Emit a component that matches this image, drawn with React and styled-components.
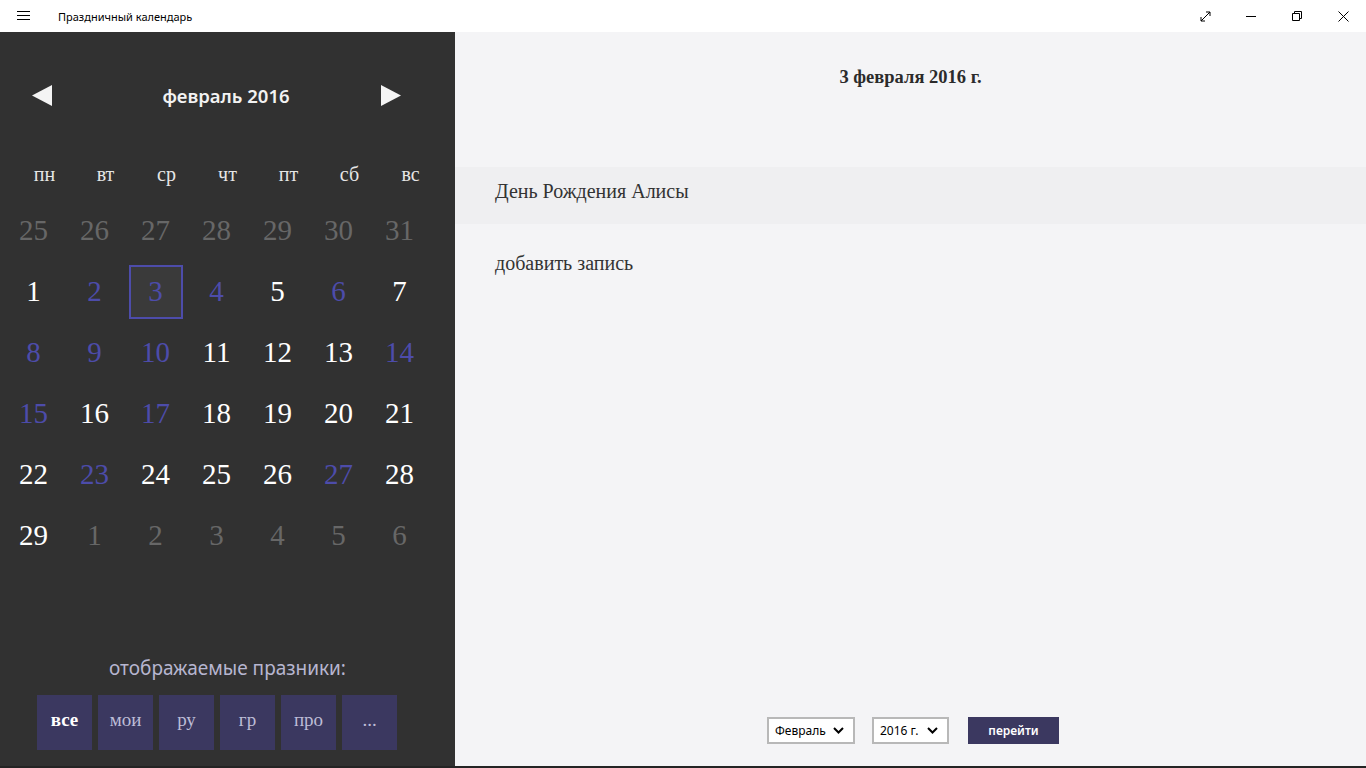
import React from 'react';
import styled, { createGlobalStyle } from 'styled-components';

const GlobalStyle = createGlobalStyle`
  html, body {
    margin: 0;
    padding: 0;
    height: 100%;
    overflow: hidden;
  }
  #root {
    height: 100%;
  }
`;

const Window = styled.div`
  width: 1366px;
  height: 768px;
  display: flex;
  flex-direction: column;
  background: #1f1f1f;
`;

const TitleBar = styled.div`
  height: 32px;
  flex: 0 0 32px;
  background: #ffffff;
  display: flex;
  align-items: center;
  font-family: 'Noto Sans', 'Open Sans', sans-serif;
`;

const MenuButton = styled.div`
  width: 46px;
  height: 32px;
  display: flex;
  align-items: center;
  justify-content: center;
`;

const AppTitle = styled.span`
  font-size: 11px;
  color: #000;
  margin-left: 12px;
`;

const WinControls = styled.div`
  margin-left: auto;
  display: flex;
`;

const WinButton = styled.div`
  width: 46px;
  height: 32px;
  display: flex;
  align-items: center;
  justify-content: center;
`;

const Main = styled.div`
  display: flex;
  height: 734px;
`;

const Sidebar = styled.div`
  width: 455px;
  flex: 0 0 455px;
  background: #313131;
  display: flex;
  flex-direction: column;
`;

const MonthHeader = styled.div`
  margin-top: 43px;
  height: 40px;
  display: flex;
  align-items: center;
  padding-left: 22px;
`;

const ArrowBox = styled.div`
  width: 40px;
  height: 40px;
  display: flex;
  align-items: center;
  justify-content: center;
`;

const MonthTitle = styled.div`
  flex: 0 0 309px;
  text-align: center;
  padding-left: 19px;
  box-sizing: border-box;
  font-family: 'Noto Sans', 'Open Sans', sans-serif;
  font-weight: 600;
  font-size: 18.5px;
  color: #f2f2f2;
`;

const WeekRow = styled.div`
  margin-top: 44px;
  padding-left: 14px;
  display: grid;
  grid-template-columns: repeat(7, 61px);
  height: 30px;
`;

const WeekDay = styled.div`
  display: flex;
  align-items: center;
  justify-content: center;
  font-family: 'Liberation Serif', 'Times New Roman', serif;
  font-size: 20px;
  color: #e6e6e6;
`;

const DayGrid = styled.div`
  margin-top: 11px;
  padding-left: 3px;
  display: grid;
  grid-template-columns: repeat(7, 61px);
  grid-auto-rows: 61px;
`;

const dayColors = {
  other: '#676767',
  normal: '#ffffff',
  holiday: '#4d4caa',
};

const DayCell = styled.div`
  display: flex;
  align-items: center;
  justify-content: center;
`;

const DayNumber = styled.div`
  width: 54px;
  height: 54px;
  box-sizing: border-box;
  display: flex;
  align-items: center;
  justify-content: center;
  font-family: 'Liberation Serif', 'Times New Roman', serif;
  font-size: 29px;
  color: ${(p) => dayColors[p.$kind]};
  background: ${(p) => (p.$selected ? '#3a3a3a' : 'transparent')};
  border: 2px solid ${(p) => (p.$selected ? '#4d4caa' : 'transparent')};
`;

const FilterSection = styled.div`
  margin-top: auto;
  padding-bottom: 16px;
  display: flex;
  flex-direction: column;
`;

const FilterLabel = styled.div`
  height: 24px;
  line-height: 24px;
  text-align: center;
  font-family: 'Noto Sans', 'Open Sans', sans-serif;
  font-size: 19px;
  color: #b7b6d0;
`;

const FilterButtons = styled.div`
  margin-top: 15px;
  padding-left: 37px;
  display: flex;
  gap: 6px;
`;

const FilterButton = styled.div`
  width: 55px;
  height: 55px;
  background: #3b3860;
  display: flex;
  align-items: center;
  justify-content: center;
  padding-bottom: 6px;
  box-sizing: border-box;
  font-family: 'Liberation Serif', 'Times New Roman', serif;
  font-size: 19px;
  font-weight: ${(p) => (p.$active ? 700 : 400)};
  color: ${(p) => (p.$active ? '#ffffff' : '#bdbcd6')};
`;

const Content = styled.div`
  flex: 1;
  background: #f4f4f6;
  display: flex;
  flex-direction: column;
`;

const DateHeading = styled.div`
  margin-top: 30px;
  height: 30px;
  line-height: 30px;
  text-align: center;
  font-family: 'Liberation Serif', 'Times New Roman', serif;
  font-weight: 700;
  font-size: 18.5px;
  color: #2b2b2b;
`;

const EntryRow = styled.div`
  margin-top: 75px;
  height: 57px;
  display: flex;
  align-items: center;
  padding-left: 40px;
  padding-bottom: 8px;
  box-sizing: border-box;
  background: ${(p) => (p.$filled ? '#efeff1' : 'transparent')};
  font-family: 'Liberation Serif', 'Times New Roman', serif;
  font-size: 20px;
  color: #333333;
`;

const AddRow = styled.div`
  margin-top: 24px;
  height: 30px;
  line-height: 30px;
  padding-left: 40px;
  font-family: 'Liberation Serif', 'Times New Roman', serif;
  font-size: 20px;
  color: #333333;
`;

const JumpBar = styled.div`
  margin-top: auto;
  padding-bottom: 22px;
  padding-left: 5px;
  display: flex;
  justify-content: center;
  gap: 17px;
`;

const SelectBox = styled.div`
  width: ${(p) => p.$width}px;
  height: 27px;
  box-sizing: border-box;
  border: 2px solid #b8b8b8;
  background: #ffffff;
  display: flex;
  align-items: center;
  padding: 0 9px 0 6px;
  font-family: 'Noto Sans', 'Open Sans', sans-serif;
  font-size: 12px;
  color: #000;
  svg {
    margin-left: auto;
  }
`;

const GoButton = styled.div`
  width: 91px;
  height: 27px;
  margin-left: 2px;
  background: #3b3860;
  display: flex;
  align-items: center;
  justify-content: center;
  font-family: 'Noto Sans', 'Open Sans', sans-serif;
  font-size: 12px;
  font-weight: 600;
  color: #ffffff;
`;

const BottomStrip = styled.div`
  height: 2px;
  background: #242424;
`;

const Chevron = () => (
  <svg width="11" height="7" viewBox="0 0 11 7">
    <path d="M1 1 L5.5 5.5 L10 1" fill="none" stroke="#000" strokeWidth="2" />
  </svg>
);

const weekdays = ['пн', 'вт', 'ср', 'чт', 'пт', 'сб', 'вс'];
const holidays = [2, 3, 4, 6, 8, 9, 10, 14, 15, 17, 23, 27];

const buildDays = () => {
  const days = [];
  for (let d = 25; d <= 31; d++) days.push({ n: d, kind: 'other' });
  for (let d = 1; d <= 29; d++) {
    days.push({ n: d, kind: holidays.includes(d) ? 'holiday' : 'normal', selected: d === 3 });
  }
  for (let d = 1; d <= 6; d++) days.push({ n: d, kind: 'other' });
  return days;
};

const filters = ['все', 'мои', 'ру', 'гр', 'про', '...'];

export default function App() {
  const days = buildDays();
  return (
    <Window>
      <GlobalStyle />
      <TitleBar>
        <MenuButton>
          <svg width="13" height="10" viewBox="0 0 13 10">
            <path d="M0 0.5 H13 M0 4.5 H13 M0 8.5 H13" stroke="#000" strokeWidth="1" />
          </svg>
        </MenuButton>
        <AppTitle>Праздничный календарь</AppTitle>
        <WinControls>
          <WinButton>
            <svg width="11" height="11" viewBox="0 0 11 11">
              <path d="M1 10 L10 1 M6 1 H10 V5 M1 6 V10 H5" fill="none" stroke="#000" strokeWidth="1" />
            </svg>
          </WinButton>
          <WinButton>
            <svg width="10" height="1" viewBox="0 0 10 1">
              <path d="M0 0.5 H10" stroke="#000" strokeWidth="1" />
            </svg>
          </WinButton>
          <WinButton>
            <svg width="10" height="10" viewBox="0 0 10 10">
              <path d="M0.5 2.5 H7.5 V9.5 H0.5 Z M2.5 2.5 V0.5 H9.5 V7.5 H7.5" fill="none" stroke="#000" strokeWidth="1" />
            </svg>
          </WinButton>
          <WinButton>
            <svg width="11" height="11" viewBox="0 0 11 11">
              <path d="M0.5 0.5 L10.5 10.5 M10.5 0.5 L0.5 10.5" stroke="#000" strokeWidth="1" />
            </svg>
          </WinButton>
        </WinControls>
      </TitleBar>
      <Main>
        <Sidebar>
          <MonthHeader>
            <ArrowBox>
              <svg width="20" height="21" viewBox="0 0 20 21">
                <path d="M0 10.5 L20 0 V21 Z" fill="#f4f4f4" />
              </svg>
            </ArrowBox>
            <MonthTitle>февраль 2016</MonthTitle>
            <ArrowBox>
              <svg width="20" height="21" viewBox="0 0 20 21">
                <path d="M20 10.5 L0 0 V21 Z" fill="#f4f4f4" />
              </svg>
            </ArrowBox>
          </MonthHeader>
          <WeekRow>
            {weekdays.map((w) => (
              <WeekDay key={w}>{w}</WeekDay>
            ))}
          </WeekRow>
          <DayGrid>
            {days.map((d, i) => (
              <DayCell key={i}>
                <DayNumber $kind={d.kind} $selected={d.selected}>
                  {d.n}
                </DayNumber>
              </DayCell>
            ))}
          </DayGrid>
          <FilterSection>
            <FilterLabel>отображаемые празники:</FilterLabel>
            <FilterButtons>
              {filters.map((f, i) => (
                <FilterButton key={f} $active={i === 0}>
                  {f}
                </FilterButton>
              ))}
            </FilterButtons>
          </FilterSection>
        </Sidebar>
        <Content>
          <DateHeading>3 февраля 2016 г.</DateHeading>
          <EntryRow $filled>День Рождения Алисы</EntryRow>
          <AddRow>добавить запись</AddRow>
          <JumpBar>
            <SelectBox $width={88}>
              Февраль
              <Chevron />
            </SelectBox>
            <SelectBox $width={77}>
              2016 г.
              <Chevron />
            </SelectBox>
            <GoButton>перейти</GoButton>
          </JumpBar>
        </Content>
      </Main>
      <BottomStrip />
    </Window>
  );
}
